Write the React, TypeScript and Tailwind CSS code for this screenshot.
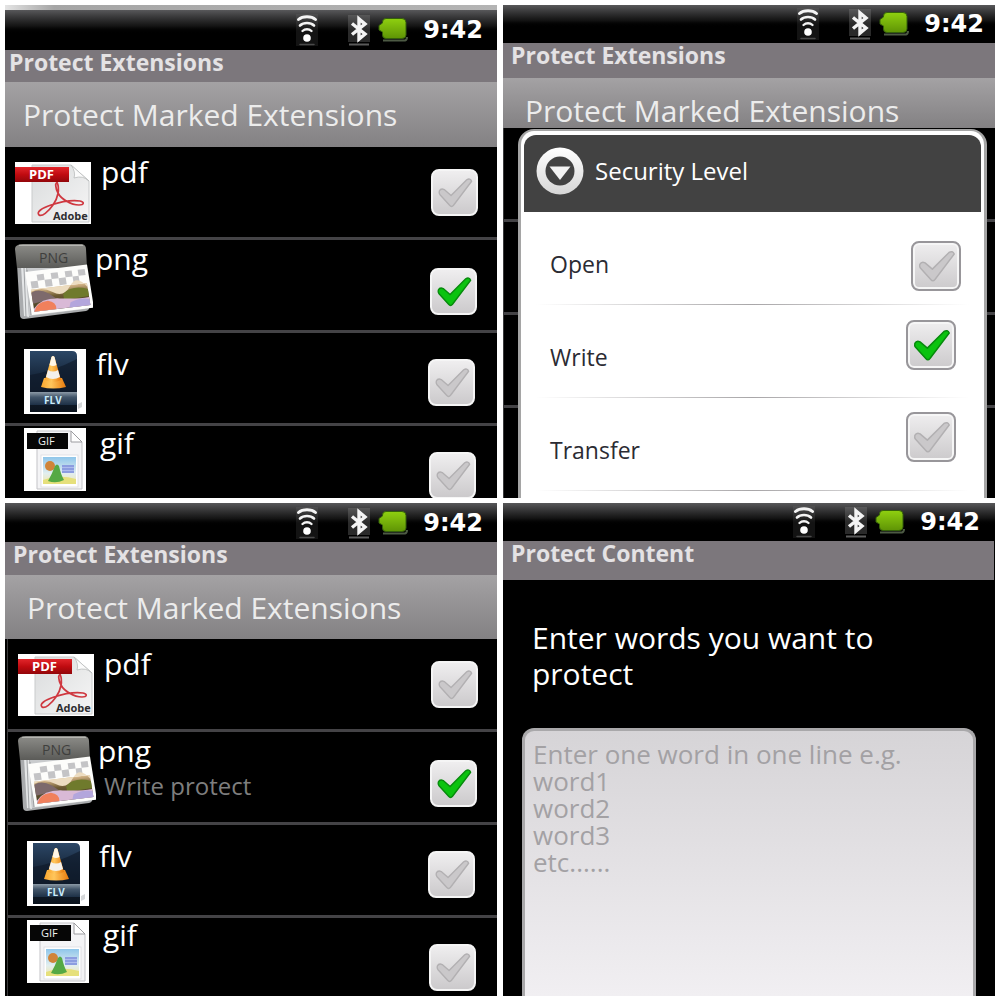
import type { ReactNode } from "react";

function WifiIcon() {
  return (
    <svg viewBox="0 0 22 32" className="h-8 w-[22px] shrink-0" fill="none" stroke="#f4f4f4" strokeLinecap="round" aria-hidden="true">
      <rect x="0" y="0" width="22" height="32" fill="#8a8a8a" fillOpacity="0.14" stroke="none" />
      <path d="M2.500 5.500C6.500 1.800 15.500 1.800 19.500 5.500" strokeWidth="3" />
      <path d="M4 11.500C7.500 8.200 14.500 8.200 18 11.500" strokeWidth="2.600" />
      <path d="M6.500 17C9 14.600 13 14.600 15.500 17" strokeWidth="2.400" />
      <circle cx="11" cy="24" r="3.800" fill="#fff" stroke="none" />
      <path d="M4 30.500H18" stroke="#4a4a4a" strokeWidth="1.500" />
    </svg>
  );
}

function BluetoothIcon() {
  return (
    <svg viewBox="0 0 22 32" className="h-8 w-[22px] shrink-0" fill="none" aria-hidden="true">
      <rect x="0" y="1" width="22" height="27" fill="#8a8a8a" fillOpacity="0.3" />
      <path d="M4 9.500L17 20L11 25V5L17 10L4 20.500" stroke="#f4f4f4" strokeWidth="3.400" strokeLinejoin="miter" />
      <path d="M1 30.500H21" stroke="#5a5a5a" strokeWidth="2" />
    </svg>
  );
}

function BatteryIcon() {
  return (
    <svg viewBox="0 0 30 26" className="h-[26px] w-[30px] shrink-0" aria-hidden="true">
      <defs>
        <linearGradient id="cell" x1="0" y1="0" x2="0" y2="1">
          <stop offset="0" stopColor="#8fd010" />
          <stop offset="1" stopColor="#5f9405" />
        </linearGradient>
      </defs>
      <path d="M5 23.500H27Q29 23 29 20" fill="none" stroke="#4d5a44" strokeWidth="2" />
      <path d="M8 1.500H24Q28 1.500 28 5.500V18Q28 21.500 24 21.500H8Q4.500 21.500 4.500 18V15L1 13V8.500L4.500 6V5Q4.500 1.500 8 1.500Z" fill="url(#cell)" stroke="#35610a" strokeWidth="1" />
    </svg>
  );
}

function StatusBar({ className }: { className: string }) {
  return (
    <div className={`flex shrink-0 items-center justify-end bg-linear-to-b from-[#58585a] via-[#141414] via-40% to-black to-60% ${className}`}>
      <WifiIcon />
      <div className="ml-[30px] flex items-center gap-2">
        <BluetoothIcon />
        <BatteryIcon />
      </div>
      <time className="ml-[15px] font-['DejaVu_Sans',sans-serif] text-2xl leading-8 font-bold text-white">9:42</time>
    </div>
  );
}

function TitleBar({ className, children }: { className: string; children: ReactNode }) {
  return (
    <h1 className={`shrink-0 bg-[#7c777c] text-[23px] leading-[25px] font-bold text-[#e4e2e4] ${className}`}>{children}</h1>
  );
}

function HeaderBar({ className, children }: { className: string; children: ReactNode }) {
  return (
    <h2 className={`shrink-0 bg-linear-to-b from-[#a4a2a4] to-[#838183] pt-4 text-[30px] leading-[34px] text-[#ececec] ${className}`}>
      {children}
    </h2>
  );
}

function PdfIcon() {
  return (
    <svg viewBox="0 0 76 62" className="h-[62px] w-[76px]" aria-hidden="true">
      <defs>
        <linearGradient id="pdfPage" x1="0" y1="0" x2="1" y2="1">
          <stop offset="0" stopColor="#d9dbdc" />
          <stop offset="1" stopColor="#f6f6f6" />
        </linearGradient>
        <linearGradient id="pdfRed" x1="0" y1="0" x2="0" y2="1">
          <stop offset="0" stopColor="#e2262b" />
          <stop offset="0.500" stopColor="#c00b10" />
          <stop offset="1" stopColor="#92060a" />
        </linearGradient>
      </defs>
      <rect width="76" height="62" fill="#fff" />
      <path d="M17 3H56L74 19V60H17Z" fill="url(#pdfPage)" stroke="#c9cbcc" />
      <path d="M56 3Q61 10 59 16Q68 13 74 19Z" fill="#fbfbfb" stroke="#b9bbbb" strokeWidth="0.800" />
      <path
        d="M42 20C45 27 43 36 38 43C33 50 27 55 24 53C21 50 27 46 36 43C45 40 57 38 65 39C70 40 69 43 64 43C56 43 46 37 43 31C41 27 40 22 42 20Z"
        fill="none"
        stroke="#cf3840"
        strokeWidth="1.700"
      />
      <rect x="0" y="5" width="54" height="15" fill="url(#pdfRed)" />
      <text x="14" y="17" fontSize="13" fontWeight="700" fill="#fff">PDF</text>
      <text x="38" y="58" fontSize="11" fontWeight="700" fill="#2e2e30">Adobe</text>
    </svg>
  );
}

function PngIcon() {
  return (
    <svg viewBox="0 0 78 75" className="h-[75px] w-[78px]" aria-hidden="true">
      <defs>
        <linearGradient id="pngTab" x1="0" y1="0" x2="0" y2="1">
          <stop offset="0" stopColor="#8d8d89" />
          <stop offset="1" stopColor="#5b5b58" />
        </linearGradient>
        <linearGradient id="pngLand" x1="0" y1="0" x2="0" y2="1">
          <stop offset="0" stopColor="#d9b98c" />
          <stop offset="0.400" stopColor="#6d5a32" />
          <stop offset="1" stopColor="#3c3a22" />
        </linearGradient>
      </defs>
      <path d="M2 20L5 71Q5 75 9 75L71 67Q75 66 74 62L71 20Z" fill="#a9abad" />
      <path d="M6 22L9 72L14 73L11 22Z" fill="#e4e6e7" />
      <path d="M12 22L14 72L70 65L69 22Z" fill="#c9cbcd" />
      <path d="M12 26L16 71M9 24L11 73" stroke="#8f9294" strokeWidth="0.800" />
      <path d="M3 1Q4 0 8 0H67Q71 1 71 5L72 24H2L0 5Q0 2 3 1Z" fill="url(#pngTab)" />
      <path d="M4 1.500H68" stroke="#b5b5b1" strokeWidth="1" />
      <text x="24" y="19" fontSize="14" fill="#3f3f3d">PNG</text>
      <g transform="matrix(1 -0.120 0.160 1 10 28)">
        <rect width="62" height="43" fill="#fdfdfb" />
        <g fill="#c4c4c6">
          <rect x="11" y="4" width="7" height="6" />
          <rect x="25" y="4" width="7" height="6" />
          <rect x="39" y="4" width="7" height="6" />
          <rect x="52" y="4" width="7" height="6" />
          <rect x="4" y="10" width="7" height="7" />
          <rect x="18" y="10" width="7" height="7" />
          <rect x="32" y="10" width="7" height="7" />
          <rect x="46" y="10" width="6" height="7" />
        </g>
        <g transform="translate(0 2)">
          <rect x="3" y="16" width="56" height="22" fill="url(#pngLand)" />
          <path d="M3 18Q14 14 24 21T42 17T59 20V16H3Z" fill="#ecdcc0" />
          <path d="M3 19Q11 15 20 22L26 27L3 30Z" fill="#7d6a6c" />
          <path d="M34 24Q44 16 59 22V29L34 30Z" fill="#6f7a2c" />
          <path d="M3 38V35Q12 25 30 28T59 30V38Z" fill="#d9b9d6" />
          <path d="M3 38Q6 29 18 29Q26 31 25 38Z" fill="#f0805c" />
          <path d="M40 33Q50 29 59 32V38H38Z" fill="#b3a6dc" />
        </g>
      </g>
    </svg>
  );
}

function FlvIcon() {
  return (
    <svg viewBox="0 0 62 65" className="h-[65px] w-[62px]" aria-hidden="true">
      <defs>
        <linearGradient id="flvBody" x1="0" y1="0" x2="0" y2="1">
          <stop offset="0" stopColor="#2c4766" />
          <stop offset="0.350" stopColor="#1a2c42" />
          <stop offset="1" stopColor="#0b131d" />
        </linearGradient>
        <linearGradient id="flvBand" x1="0" y1="0" x2="0" y2="1">
          <stop offset="0" stopColor="#8c9aa6" />
          <stop offset="0.400" stopColor="#43566a" />
          <stop offset="1" stopColor="#1d3046" />
        </linearGradient>
        <linearGradient id="cone" x1="0" y1="0" x2="1" y2="0">
          <stop offset="0" stopColor="#f9a52c" />
          <stop offset="0.400" stopColor="#ffc65c" />
          <stop offset="1" stopColor="#e87a0c" />
        </linearGradient>
      </defs>
      <rect width="62" height="65" fill="#fff" />
      <path d="M54 55L58 53V58L54 60Z" fill="#d5d7d9" />
      <path d="M6 2H48Q53 2 53 7V63H6Z" fill="url(#flvBody)" />
      <path d="M6 26Q30 22 53 10V43H6Z" fill="#0d1826" fillOpacity="0.600" />
      <rect x="6" y="43" width="47" height="13" fill="url(#flvBand)" />
      <path d="M20 29H38L42 38Q29 41 17 38Z" fill="url(#cone)" />
      <path d="M27.500 8Q29 6 30.500 8L37 31Q29 35 21 31Z" fill="url(#cone)" />
      <path d="M27.500 8Q29 6 30.500 8L32.500 16Q29 18 25.500 16Z" fill="#fff6e6" />
      <path d="M24 21Q29 24 34 21L36 28Q29 32 22 28Z" fill="#f4f1ec" />
      <text x="20" y="55" fontSize="10" fontWeight="700" fill="#c9ecfb">FLV</text>
    </svg>
  );
}

function GifIcon() {
  return (
    <svg viewBox="0 0 62 63" className="h-[63px] w-[62px]" aria-hidden="true">
      <defs>
        <linearGradient id="gifSky" x1="0" y1="0" x2="0" y2="1">
          <stop offset="0" stopColor="#8fc6ea" />
          <stop offset="0.600" stopColor="#e2eef0" />
          <stop offset="1" stopColor="#f0e7ad" />
        </linearGradient>
      </defs>
      <rect width="62" height="63" fill="#fff" />
      <path d="M13 3H47L58 14V61H13Z" fill="#f4f4f6" stroke="#c3c3c7" />
      <path d="M47 3V14H58Z" fill="#fff" stroke="#9c9ca0" />
      <rect x="17" y="27" width="37" height="32" fill="#fff" stroke="#dcdce0" strokeWidth="0.800" />
      <rect x="19" y="29" width="33" height="27" fill="url(#gifSky)" />
      <rect x="38" y="37" width="12" height="8" fill="#8c9de0" />
      <path d="M38 39.500H50M38 42.500H50" stroke="#b9c4f0" strokeWidth="0.800" />
      <path d="M19 52Q34 46 52 51V56H19Z" fill="#e6e07c" />
      <circle cx="26" cy="38" r="5" fill="#d08439" />
      <path d="M24 53Q28 46 31 38Q33 35 35 38Q37 47 40 52Q32 56 24 53Z" fill="#55a944" />
      <rect x="3" y="5" width="41" height="16" fill="#060606" />
      <text x="14" y="17" fontSize="11" fill="#f0f0f0">GIF</text>
    </svg>
  );
}

function DropIcon() {
  return (
    <svg viewBox="0 0 48 48" className="size-12 shrink-0" aria-hidden="true">
      <defs>
        <linearGradient id="ring" x1="0" y1="0" x2="0" y2="1">
          <stop offset="0" stopColor="#ffffff" />
          <stop offset="1" stopColor="#d6d6d6" />
        </linearGradient>
      </defs>
      <circle cx="24" cy="24" r="23.500" fill="url(#ring)" />
      <circle cx="24" cy="24" r="14.500" fill="#424242" />
      <path d="M13.500 19.500H34.500L24 33Z" fill="#f2f2f2" />
    </svg>
  );
}

function Tick({ label, checked, boxed, className }: { label: string; checked?: boolean; boxed?: boolean; className: string }) {
  return (
    <span className={`relative block shrink-0 ${className}`}>
      <input
        type="checkbox"
        aria-label={label}
        defaultChecked={checked}
        className={`peer block size-full appearance-none rounded-lg border-2 bg-linear-to-b from-[#efeeef] to-[#cccacc] ${
          boxed ? "border-[#98969a] shadow-[inset_0_0_0_2px_#f6f6f6]" : "border-[#f5f5f5]"
        }`}
      />
      <svg
        viewBox="0 0 48 48"
        fill="none"
        strokeLinejoin="round"
        className="pointer-events-none absolute inset-0 size-full text-[#cac8ca] [--edge:#b2b0b2] peer-checked:text-[#0bc30f] peer-checked:[--edge:#078a0c]"
        aria-hidden="true"
      >
        <path
          d="M8.500 22.500Q10 19.500 13.500 21L20.500 27L36.500 11Q40 9 41.500 12.500L23 37Q21 39.500 19 37L9 26Q8 24.500 8.500 22.500Z"
          fill="currentColor"
          stroke="var(--edge)"
          strokeWidth="1.400"
        />
      </svg>
    </span>
  );
}

type Extension = {
  name: string;
  icon: ReactNode;
  row: string;
  top: string;
  text: string;
  tick: string;
  checked?: boolean;
};

const extensions: Extension[] = [
  { name: "pdf", icon: <PdfIcon />, row: "pl-2.5 pr-[19px]", top: "pt-[15px]", text: "pt-[10px] pl-2.5", tick: "mt-[22px]" },
  { name: "png", icon: <PngIcon />, row: "pl-2.5 pr-5", top: "pt-1", text: "pt-1 pl-0.5", tick: "mt-7", checked: true },
  { name: "flv", icon: <FlvIcon />, row: "pl-[19px] pr-[22px]", top: "pt-4", text: "pt-4 pl-2.5", tick: "mt-[26px]" },
  { name: "gif", icon: <GifIcon />, row: "pl-[19px] pr-[21px]", top: "pt-0.5", text: "pt-0.5 pl-3.5", tick: "mt-[26px]" },
];

function ExtensionList({ className, note }: { className: string; note?: string }) {
  return (
    <ul className={`min-h-0 flex-1 bg-black ${className}`}>
      {extensions.map((ext) => (
        <li key={ext.name} className={`flex h-[93px] items-start border-b-3 border-[#444346] ${ext.row}`}>
          <div className={ext.top}>{ext.icon}</div>
          <div className={ext.text}>
            <p className="text-[30px] leading-[30px] text-white">{ext.name}</p>
            {note && ext.checked ? <p className="pt-1 pl-1.5 text-2xl leading-8 text-[#7e7e7e]">{note}</p> : null}
          </div>
          <Tick label={ext.name} checked={ext.checked} className={`ml-auto size-[47px] ${ext.tick}`} />
        </li>
      ))}
    </ul>
  );
}

const levels = [
  { name: "Open", tick: "mt-[29px] mr-2", checked: false },
  { name: "Write", tick: "mt-[15px] mr-[13px]", checked: true },
  { name: "Transfer", tick: "mt-[14px] mr-[13px]", checked: false },
];

function SecurityDialog() {
  return (
    <section
      aria-label="Security Level"
      className="absolute top-px right-2 bottom-0 left-3.5 overflow-hidden rounded-t-2xl border-x-3 border-t-2 border-[#a5a5a5] bg-white px-[3px] pt-1"
    >
      <header className="flex h-[77px] items-center gap-[11px] rounded-t-xl bg-[#424242] pb-1.5 pl-3">
        <DropIcon />
        <h3 className="text-2xl leading-8 text-white">Security Level</h3>
      </header>
      <ul className="px-3">
        {levels.map((level) => (
          <li key={level.name}>
            <div className="flex h-[92px] items-start justify-between pl-3.5">
              <span className="pt-[34px] text-[23px] leading-9 text-[#2b2b33]">{level.name}</span>
              <Tick label={level.name} checked={level.checked} boxed className={`size-[50px] ${level.tick}`} />
            </div>
            <div className="h-px bg-linear-to-r from-transparent via-[#a8a6a8] to-transparent" />
          </li>
        ))}
      </ul>
    </section>
  );
}

const hint = "Enter one word in one line e.g.\nword1\nword2\nword3\netc......";

export default function App() {
  return (
    <main className="grid h-screen grid-cols-2 grid-rows-2 gap-x-1.5 gap-y-[5px] bg-white px-[5px] pt-[5px] pb-1 font-['Open_Sans','Noto_Sans',sans-serif]">
      <section className="flex min-h-0 flex-col overflow-hidden bg-black">
        <div className="h-[5px] shrink-0 bg-linear-to-r from-[#e4e4e4] via-[#a5a5a5] via-10% to-[#b4b4b4]" />
        <StatusBar className="h-10 pr-3.5" />
        <TitleBar className="h-8 pl-1">Protect Extensions</TitleBar>
        <HeaderBar className="h-[65px] pl-[18px]">Protect Marked Extensions</HeaderBar>
        <ExtensionList className="" />
      </section>

      <section className="flex min-h-0 flex-col overflow-hidden bg-black">
        <StatusBar className="h-[38px] pr-[11px]" />
        <TitleBar className="h-[35px] pl-2">Protect Extensions</TitleBar>
        <HeaderBar className="h-[50px] pl-[22px]">Protect Marked Extensions</HeaderBar>
        <div className="relative min-h-0 flex-1 border-l border-[#3a3a3c] bg-black">
          <div className="h-[94px] border-b-3 border-[#444346]" />
          <div className="h-[93px] border-b-3 border-[#444346]" />
          <div className="h-[93px] border-b-3 border-[#444346]" />
          <SecurityDialog />
        </div>
      </section>

      <section className="flex min-h-0 flex-col overflow-hidden bg-black">
        <StatusBar className="h-[39px] pr-3.5" />
        <TitleBar className="h-[33px] pl-2">Protect Extensions</TitleBar>
        <HeaderBar className="h-16 pl-[22px]">Protect Marked Extensions</HeaderBar>
        <ExtensionList className="ml-0.5 border-l border-[#3a3a3c]" note="Write protect" />
      </section>

      <section className="flex min-h-0 flex-col overflow-hidden bg-black">
        <StatusBar className="h-[38px] pr-[15px]" />
        <TitleBar className="mr-px h-[39px] pl-2">Protect Content</TitleBar>
        <label htmlFor="words" className="block shrink-0 pt-10 pr-16 pl-[29px] text-[30px] leading-9 text-white">
          Enter words you want to protect
        </label>
        <textarea
          id="words"
          placeholder={hint}
          className="mt-9 mr-[19px] ml-[19px] block min-h-0 flex-1 resize-none rounded-t-xl border-x-3 border-t-3 border-[#a9a8aa] bg-linear-to-b from-[#d6d4d7] to-[#f1eff2] px-2 pt-2.5 text-[26px] leading-[27px] text-[#444] outline-none placeholder:text-[#a3a1a4]"
        />
      </section>
    </main>
  );
}
